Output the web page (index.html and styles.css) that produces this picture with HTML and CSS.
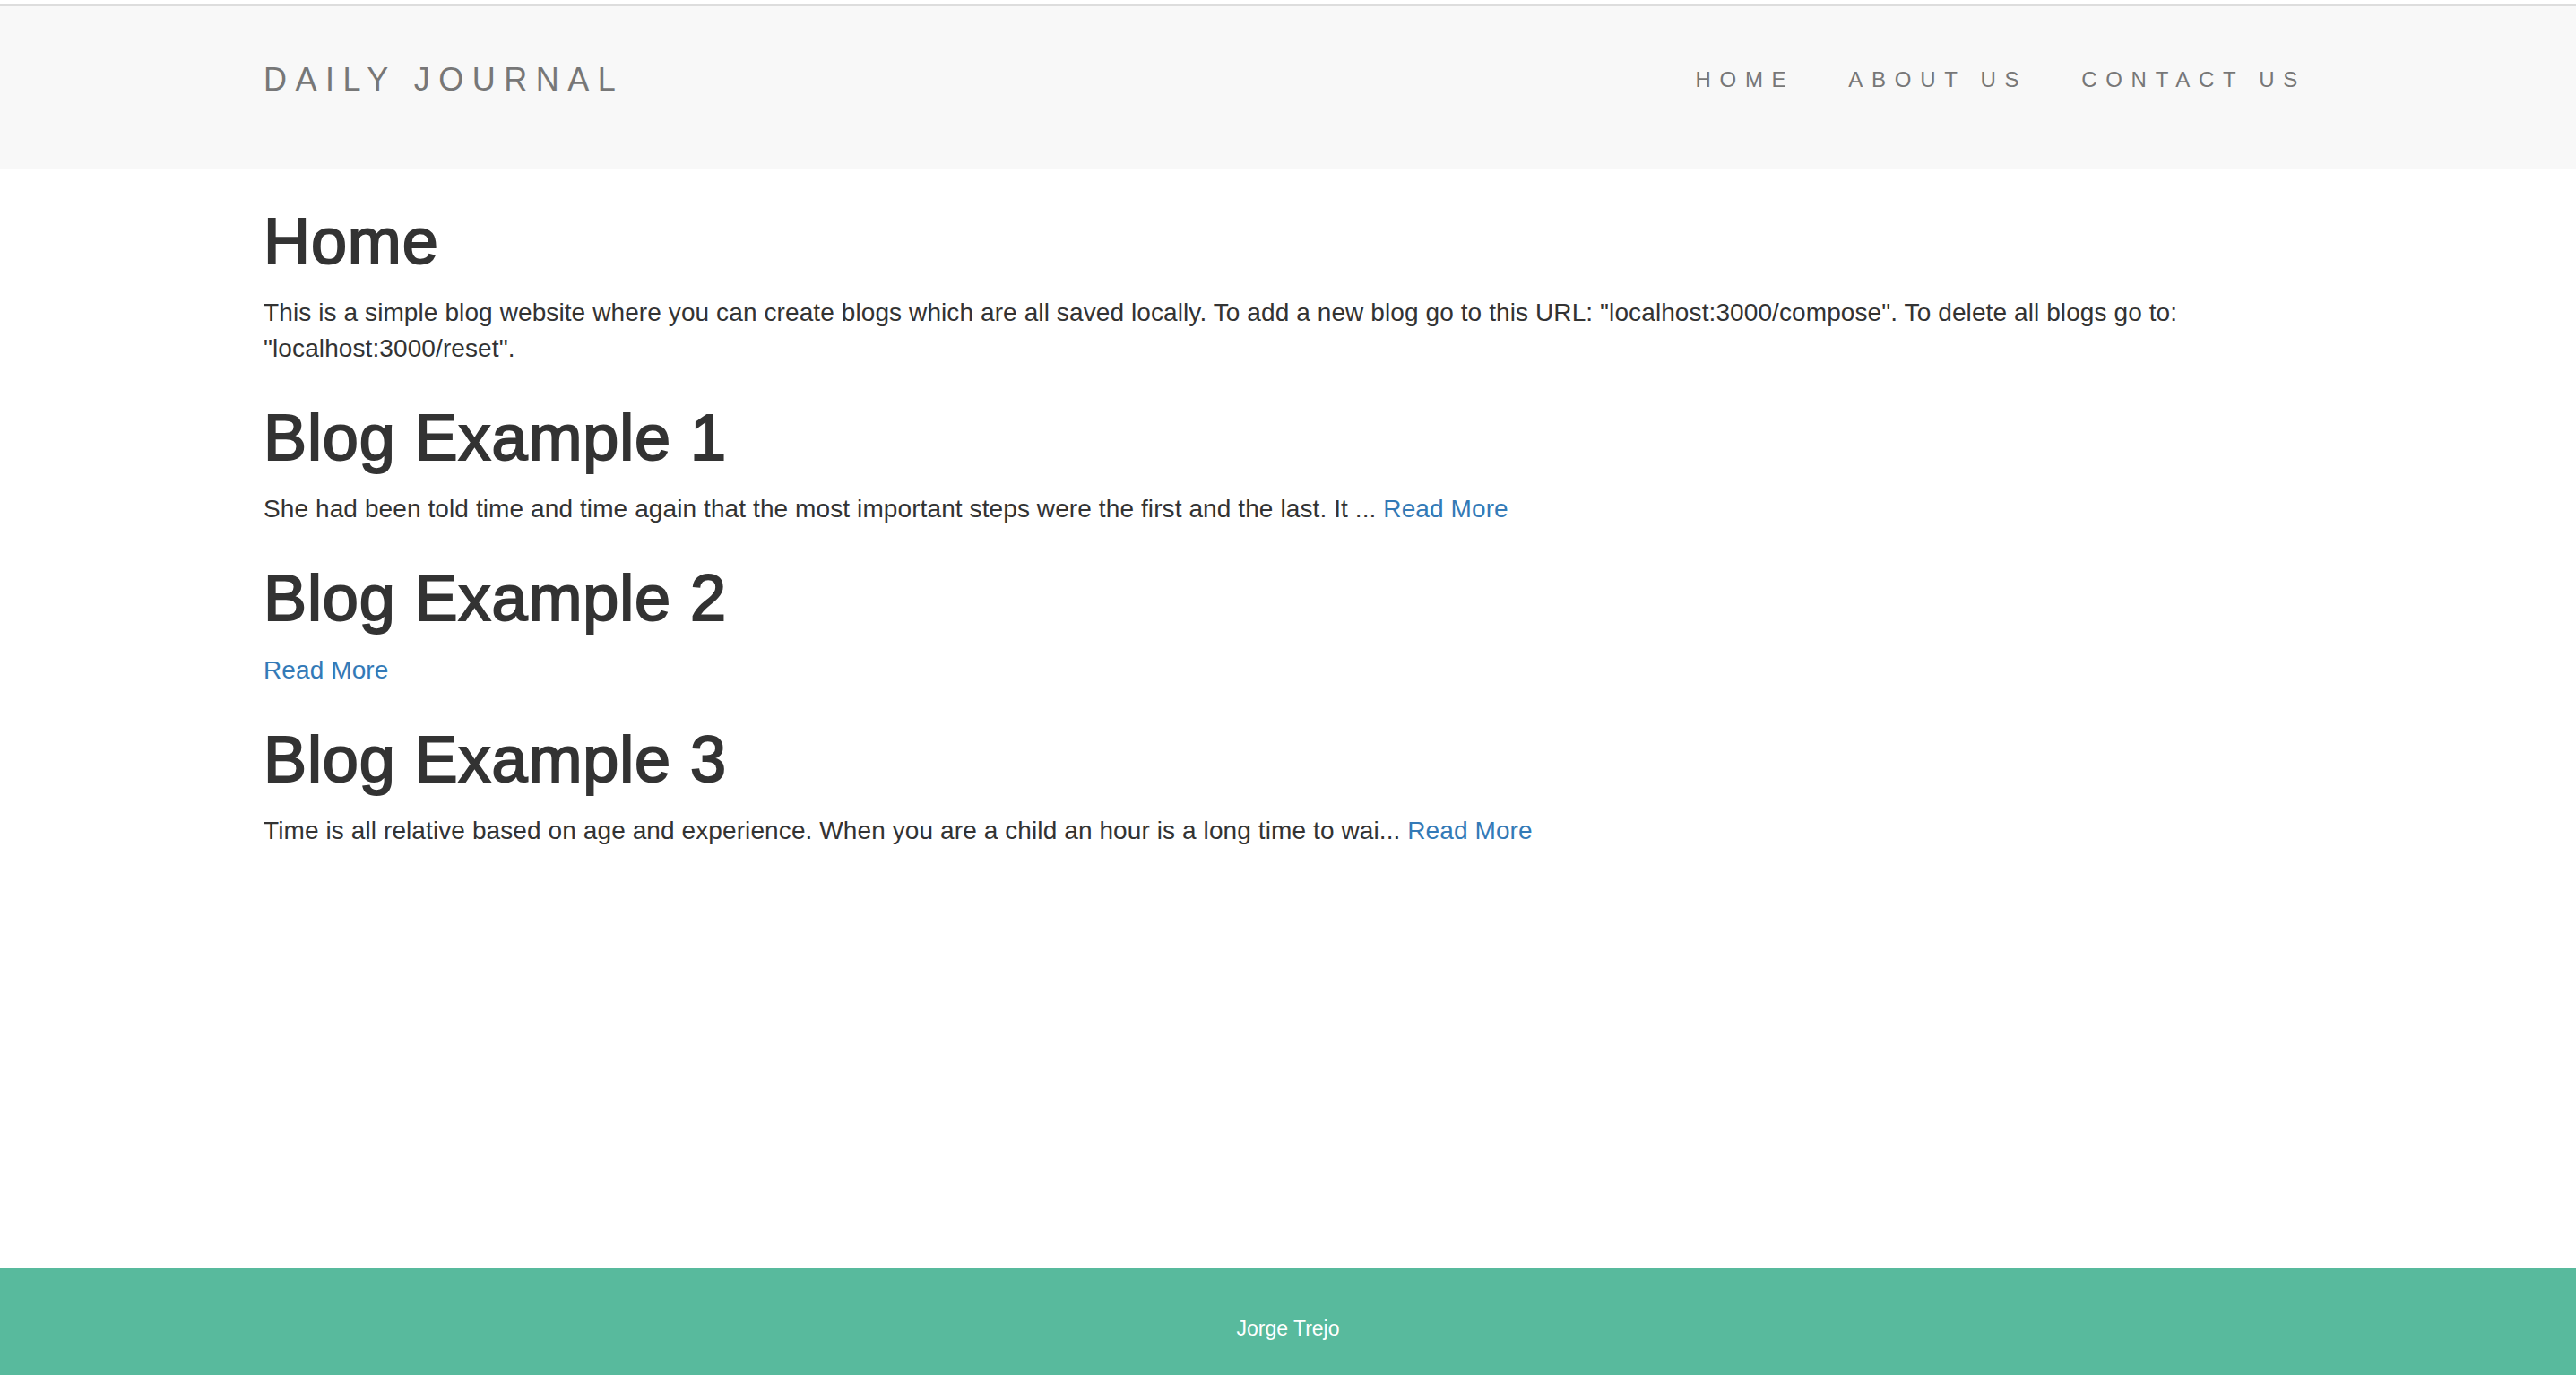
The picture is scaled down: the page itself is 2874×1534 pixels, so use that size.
FILE: index.html
```html
<!DOCTYPE html>
<html lang="en">
<head>
<meta charset="utf-8">
<title>Daily Journal</title>
<link rel="stylesheet" href="styles.css">
</head>
<body>
<header class="site-header">
  <div class="container header-inner">
    <a class="brand" href="#">DAILY JOURNAL</a>
    <nav class="nav">
      <a href="#">HOME</a>
      <a href="#">ABOUT US</a>
      <a href="#">CONTACT US</a>
    </nav>
  </div>
</header>
<main class="container content">
  <h1>Home</h1>
  <p>This is a simple blog website where you can create blogs which are all saved locally. To add a new blog go to this URL: "localhost:3000/compose". To delete all blogs go to: "localhost:3000/reset".</p>

  <h1>Blog Example 1</h1>
  <p>She had been told time and time again that the most important steps were the first and the last. It ... <a href="#">Read More</a></p>

  <h1>Blog Example 2</h1>
  <p><a href="#">Read More</a></p>

  <h1>Blog Example 3</h1>
  <p>Time is all relative based on age and experience. When you are a child an hour is a long time to wai... <a href="#">Read More</a></p>
</main>
<footer class="site-footer">
  <p class="credit">Jorge Trejo</p>
</footer>
</body>
</html>
```
FILE: styles.css
```css
html, body {
  margin: 0;
  padding: 0;
}

body {
  font-family: "Liberation Sans", Arial, Helvetica, sans-serif;
  font-size: 28px;
  line-height: 40px;
  letter-spacing: 0.1px;
  color: #333;
  background: #fff;
  min-height: 100vh;
  box-sizing: border-box;
  padding-top: 5px;
  display: flex;
  flex-direction: column;
}

a {
  color: #337ab7;
  text-decoration: none;
}

.container {
  width: 2346px;
  margin: 0 auto;
  padding: 0 30px;
  box-sizing: border-box;
}

.site-header {
  background: #f8f8f8;
  border-top: 2px solid #dddddd;
  height: 181px;
}

.header-inner {
  display: flex;
  justify-content: space-between;
  align-items: flex-start;
  padding-top: 62px;
}

.brand {
  font-size: 36px;
  line-height: 40px;
  letter-spacing: 9.5px;
  color: #777;
}

.nav {
  display: flex;
  margin-right: -23px;
}

.nav a {
  padding: 0 30px;
  font-size: 24px;
  line-height: 40px;
  letter-spacing: 9.7px;
  color: #777;
}

.content {
  flex: 1;
  padding-top: 2px;
}

.content h1 {
  font-size: 72px;
  line-height: 1.1;
  font-weight: 400;
  letter-spacing: 0.9px;
  -webkit-text-stroke: 2px #333;
  margin: 40px 0 20px;
  color: #333;
}

.content p {
  margin: 0 0 20px;
}

.site-footer {
  background: #58ba9d;
  height: 119px;
  box-sizing: border-box;
  padding-top: 47px;
  text-align: center;
}

.credit {
  margin: 0;
  font-size: 23px;
  line-height: 40px;
  letter-spacing: 0;
  color: #fff;
}
```
